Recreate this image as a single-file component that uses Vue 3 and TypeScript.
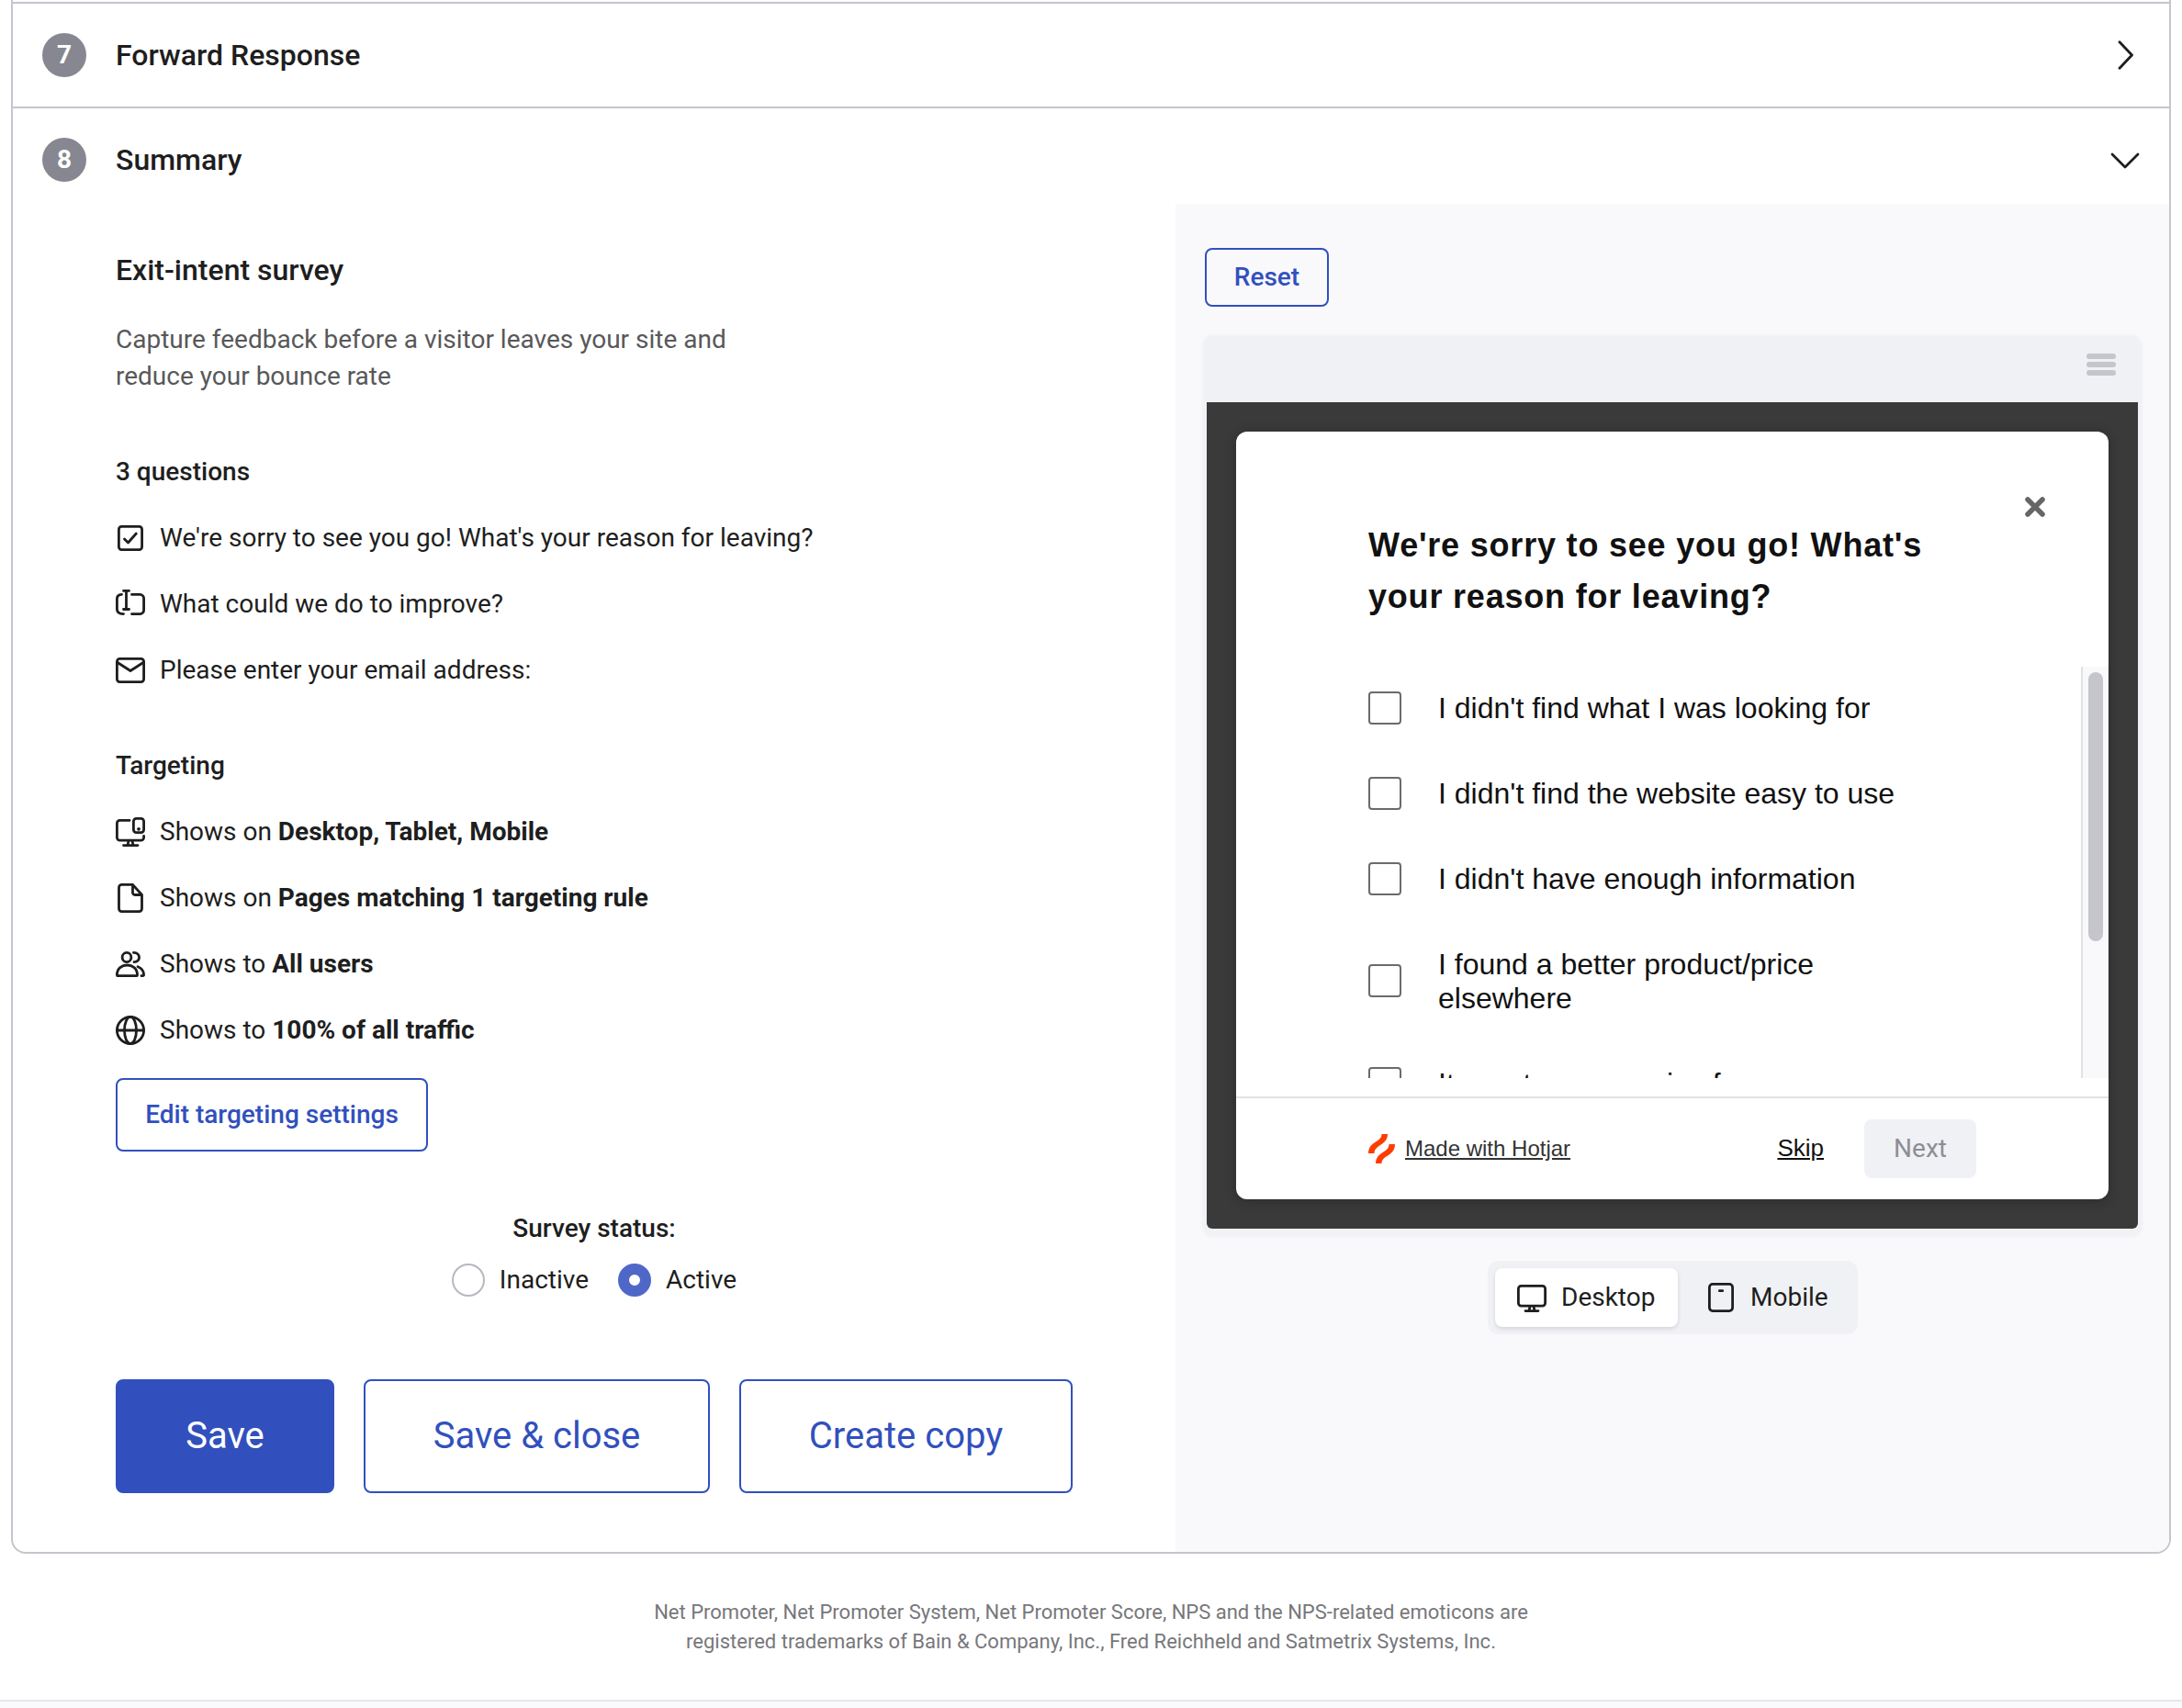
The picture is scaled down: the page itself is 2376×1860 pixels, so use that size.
<script setup lang="ts">
interface TargetRow {
  icon: string
  lead: string
  value: string
}

const questions = [
  { icon: 'check', text: "We're sorry to see you go! What's your reason for leaving?" },
  { icon: 'input', text: 'What could we do to improve?' },
  { icon: 'mail', text: 'Please enter your email address:' },
]

const targeting: TargetRow[] = [
  { icon: 'devices', lead: 'Shows on', value: 'Desktop, Tablet, Mobile' },
  { icon: 'page', lead: 'Shows on', value: 'Pages matching 1 targeting rule' },
  { icon: 'users', lead: 'Shows to', value: 'All users' },
  { icon: 'globe', lead: 'Shows to', value: '100% of all traffic' },
]

const options = [
  "I didn't find what I was looking for",
  "I didn't find the website easy to use",
  "I didn't have enough information",
  'I found a better product/price elsewhere',
  'It was too expensive for me',
]
</script>

<template>
  <div class="page">
    <div class="card">
      <div class="step">
        <span class="badge">7</span>
        <span class="step-title">Forward Response</span>
        <svg class="chev" viewBox="0 0 32 32"><path d="M10 1.7 23.5 16 10 30.3" /></svg>
      </div>
      <div class="step last">
        <span class="badge">8</span>
        <span class="step-title">Summary</span>
        <svg class="chev" viewBox="0 0 32 32"><path d="M2 10 16 24 30 10" /></svg>
      </div>
      <div class="body">
        <section class="summary">
          <h2>Exit-intent survey</h2>
          <p class="desc">Capture feedback before a visitor leaves your site and<br />reduce your bounce rate</p>
          <h3>3 questions</h3>
          <div v-for="q in questions" :key="q.icon" class="row">
            <svg class="ico" viewBox="0 0 32 32">
              <template v-if="q.icon === 'check'">
                <rect x="3.4" y="3.4" width="25.2" height="25.2" rx="3" />
                <path d="M9.5 17 13.5 21 22.3 11" />
              </template>
              <template v-else-if="q.icon === 'input'">
                <path d="M6.5 5.4C3.3 5.7 1.4 7 1.4 10V21.5C1.4 25 3.3 26.6 8.5 26.6" />
                <path d="M17.5 5.4H26.4A4.2 4.2 0 0 1 30.6 9.6V22.4A4.2 4.2 0 0 1 26.4 26.6H17.5" />
                <path d="M8.5 1.4H14.5M11.5 1.4V21.5M8.5 21.5H14.5" />
              </template>
              <template v-else>
                <rect x="1.4" y="3.4" width="29.2" height="25.2" rx="3" />
                <path d="M2 7.5 16 16.5 30 7.5" />
              </template>
            </svg>
            <span>{{ q.text }}</span>
          </div>
          <h3>Targeting</h3>
          <div v-for="t in targeting" :key="t.icon" class="row">
            <svg class="ico" viewBox="0 0 32 32">
              <template v-if="t.icon === 'devices'">
                <path d="M15 3.4H4.5A3.1 3.1 0 0 0 1.4 6.5V22A3.1 3.1 0 0 0 4.5 25.1H27.5A3.1 3.1 0 0 0 30.6 22V20.5" />
                <rect x="19.4" y="1.4" width="11.2" height="15.2" rx="3" />
                <path d="M14 25.5 13 30.5M18 25.5 19 30.5M8.5 30.6H24" />
                <circle class="dot" cx="25" cy="12.8" r="1.9" />
              </template>
              <template v-else-if="t.icon === 'page'">
                <path d="M18.5 1.4H6.5A3 3 0 0 0 3.5 4.4V27.6A3 3 0 0 0 6.5 30.6H25.5A3 3 0 0 0 28.5 27.6V12.5L18.5 1.4V9.5A2.5 2.5 0 0 0 21 12.5H28.5" />
              </template>
              <template v-else-if="t.icon === 'users'">
                <ellipse cx="12" cy="8.5" rx="4.9" ry="5.1" />
                <path d="M1.4 27.5C1.4 13.5 23.5 13.5 23.5 27.5 23.5 28.4 23 28.7 22.3 28.7H2.5C1.7 28.7 1.4 28.4 1.4 27.5Z" />
                <path d="M19.5 3.4C27.5 3.4 27.5 13.7 20 13.7M24 18.8C28.5 20.5 30.6 24 30.6 27.5 30.6 28.4 30 28.7 28 28.7" />
              </template>
              <template v-else>
                <circle cx="16" cy="16" r="14.6" />
                <ellipse cx="16" cy="16" rx="6.5" ry="14.6" />
                <path d="M1.4 16H30.6" />
              </template>
            </svg>
            <span>{{ t.lead }} <b>{{ t.value }}</b></span>
          </div>
          <button class="btn edit">Edit targeting settings</button>
          <div class="status">
            <div class="status-label">Survey status:</div>
            <div class="radios">
              <span class="radio"></span><span class="radio-text">Inactive</span>
              <span class="radio on"></span><span class="radio-text">Active</span>
            </div>
          </div>
          <div class="actions">
            <button class="btn big primary">Save</button>
            <button class="btn big close">Save &amp; close</button>
            <button class="btn big copy">Create copy</button>
          </div>
        </section>

        <section class="preview">
          <button class="btn reset">Reset</button>
          <div class="browser">
            <div class="browser-bar"><div class="burger"><i></i><i></i><i></i></div></div>
            <div class="stage">
              <div class="modal">
                <svg class="x" viewBox="0 0 22 22"><path d="M3 3 19 19M19 3 3 19" /></svg>
                <div class="question">We're sorry to see you go! What's<br />your reason for leaving?</div>
                <div class="scroller">
                  <div class="options">
                    <div v-for="o in options" :key="o" class="option">
                      <span class="box"></span><span class="option-text">{{ o }}</span>
                    </div>
                  </div>
                  <div class="track"><div class="thumb"></div></div>
                </div>
                <div class="foot">
                  <svg class="logo" viewBox="0 0 29 32">
                    <path d="M14.5 0H21C21 6 17.5 9.3 13 12 9 14.5 6.5 17 6.5 21H0C0 14.5 3.5 11.3 8 8.5 12 6 14.5 4 14.5 0Z" />
                    <path d="M22.5 11H29C29 17.5 25.5 20.8 21 23.5 17 26 14.5 28 14.5 32H8C8 26 11.5 22.5 16 19.8 20 17.3 22.5 15 22.5 11Z" />
                  </svg>
                  <a class="made">Made with Hotjar</a>
                  <a class="skip">Skip</a>
                  <span class="next">Next</span>
                </div>
              </div>
            </div>
          </div>
          <div class="toggle">
            <div class="tab active">
              <svg class="ico" viewBox="0 0 32 32">
                <rect x="1.4" y="3.4" width="29.2" height="21.7" rx="3" />
                <path d="M14 25.5 13 30.5M18 25.5 19 30.5M9 30.6H23" />
              </svg>
              <span>Desktop</span>
            </div>
            <div class="tab">
              <svg class="ico" viewBox="0 0 32 32">
                <rect x="3.4" y="1.4" width="25.2" height="29.2" rx="3.5" />
                <path d="M14.3 8.7H17.7" />
              </svg>
              <span>Mobile</span>
            </div>
          </div>
        </section>
      </div>
    </div>
    <p class="legal">
      Net Promoter, Net Promoter System, Net Promoter Score, NPS and the NPS-related emoticons are<br />registered trademarks of Bain &amp; Company, Inc., Fred Reichheld and Satmetrix Systems, Inc.
    </p>
    <div class="bottom"></div>
  </div>
</template>

<style>
body {
  margin: 0;
  background: #fff;
}
</style>

<style scoped>
* {
  box-sizing: border-box;
}
.page {
  width: 2376px;
  height: 1860px;
  overflow: hidden;
  display: flex;
  flex-direction: column;
  font-family: Roboto, sans-serif;
  font-size: 28px;
  color: #1e1e20;
}
.card {
  width: 2352px;
  height: 1692px;
  margin-left: 12px;
  border: 2px solid #c6c5ce;
  border-top: 0;
  border-radius: 0 0 16px 16px;
  overflow: hidden;
  flex: none;
}
.step {
  height: 114px;
  margin-top: 2px;
  border-top: 2px solid #c6c5ce;
  padding: 0 32px;
  display: flex;
  align-items: center;
}
.step.last {
  margin-top: 0;
  height: 106px;
  align-items: flex-start;
  padding-top: 32px;
}
.badge {
  width: 48px;
  height: 48px;
  border-radius: 50%;
  background: #868790;
  color: #fff;
  font-weight: 700;
  text-align: center;
  line-height: 47px;
}
.step-title {
  margin-left: 32px;
  font-size: 32px;
  line-height: 48px;
  font-weight: 500;
}
.chev {
  width: 32px;
  height: 32px;
  margin-left: auto;
}
.step.last .chev {
  margin-top: 8px;
}
.chev path {
  fill: none;
  stroke: #1e1e20;
  stroke-width: 2.8;
  stroke-linecap: round;
  stroke-linejoin: round;
}
.body {
  display: flex;
  height: 1468px;
}
.summary {
  width: 1266px;
  padding: 50px 0 0 112px;
}
h2 {
  margin: 0;
  font-size: 32px;
  line-height: 44px;
  font-weight: 500;
}
.desc {
  margin: 34px 0 0;
  line-height: 40px;
  color: #58585a;
}
h3 {
  margin: 64px 0 0;
  font-size: 28px;
  line-height: 40px;
  font-weight: 500;
}
.row {
  height: 40px;
  margin-top: 32px;
  display: flex;
  align-items: center;
  gap: 16px;
  line-height: 40px;
  white-space: nowrap;
}
.row b {
  font-weight: 700;
}
.ico {
  width: 32px;
  height: 32px;
  flex: none;
  fill: none;
  stroke: #1e1e20;
  stroke-width: 2.8;
  stroke-linecap: round;
  stroke-linejoin: round;
}
.dot {
  fill: #1e1e20;
  stroke: none;
}
.btn {
  display: block;
  padding: 0 0 1px;
  border: 2px solid #3150bd;
  border-radius: 8px;
  background: transparent;
  color: #3150bd;
  font-family: inherit;
  font-size: 28px;
  font-weight: 500;
}
.edit {
  width: 340px;
  height: 80px;
  margin-top: 32px;
}
.status {
  width: 1042px;
  margin-top: 64px;
  text-align: center;
}
.status-label {
  font-weight: 500;
  line-height: 40px;
}
.radios {
  display: flex;
  align-items: center;
  justify-content: center;
  margin-top: 16px;
  height: 40px;
}
.radio {
  width: 36px;
  height: 36px;
  border-radius: 50%;
  border: 2px solid #b7b8c0;
  margin-right: 16px;
}
.radio.on {
  border: 12px solid #4f68c8;
  margin-left: 32px;
}
.radio-text {
  padding-bottom: 1px;
}
.actions {
  display: flex;
  gap: 32px;
  margin-top: 88px;
}
.big {
  height: 124px;
  font-size: 40px;
  font-weight: 400;
}
.primary {
  width: 238px;
  background: #3150bd;
  color: #fff;
}
.close {
  width: 377px;
}
.copy {
  width: 363px;
}
.preview {
  flex: 1;
  background: #f9f9fc;
  padding: 48px 34px 0 32px;
}
.reset {
  width: 135px;
  height: 64px;
}
.browser {
  width: 1014px;
  height: 972px;
  margin: 32px 0 0 2px;
  border-radius: 6px;
  background: #f0f1f5;
  box-shadow: 0 4px 3px 5px #f1f2f5;
}
.browser-bar {
  height: 72px;
  display: flex;
  justify-content: flex-end;
  padding: 19px 24px 0 0;
}
.burger {
  width: 32px;
  display: flex;
  flex-direction: column;
  gap: 3px;
}
.burger i {
  height: 6px;
  border-radius: 3px;
  background: #c5c6cc;
}
.stage {
  height: 900px;
  padding: 32px;
  background: #3a3a3a;
  border-radius: 0 0 6px 6px;
}
.modal {
  position: relative;
  height: 836px;
  background: #fff;
  border-radius: 12px;
  box-shadow: 0 2px 12px 2px rgba(0, 0, 0, 0.2);
  display: flex;
  flex-direction: column;
  font-family: "Liberation Sans", Arial, sans-serif;
  color: #111;
}
.x {
  position: absolute;
  top: 71px;
  right: 69px;
  width: 22px;
  height: 22px;
}
.x path {
  stroke: #666;
  stroke-width: 5.5;
  stroke-linecap: round;
}
.question {
  margin: 96px 0 0 144px;
  height: 160px;
  font-size: 36px;
  line-height: 56px;
  font-weight: 700;
  letter-spacing: 0.8px;
  white-space: nowrap;
}
.scroller {
  height: 448px;
  overflow: hidden;
  display: flex;
}
.options {
  flex: 1;
  margin-top: -1px;
  padding-left: 144px;
}
.option {
  display: flex;
  align-items: center;
  padding: 28px 0;
}
.box {
  width: 36px;
  height: 36px;
  margin: -1px 0 1px;
  flex: none;
  border: 2px solid #6b6b6d;
  border-radius: 4px;
}
.option-text {
  width: 520px;
  margin-left: 40px;
  font-size: 32px;
  line-height: 37px;
}
.track {
  width: 30px;
  border-left: 2px solid #e2e2e4;
  border-right: 1px solid #ececef;
  background: #f9f9fc;
  padding: 6px 0 0 6px;
}
.thumb {
  width: 16px;
  height: 293px;
  border-radius: 8px;
  background: #c5c6cc;
}
.foot {
  margin-top: 20px;
  height: 112px;
  border-top: 2px solid #e2e2e2;
  padding: 0 144px;
  display: flex;
  align-items: center;
}
.logo {
  width: 29px;
  height: 32px;
  fill: #ff3c00;
}
.made,
.skip {
  text-decoration: underline;
  padding-bottom: 1px;
}
.made {
  margin-left: 11px;
  font-size: 24px;
  color: #333;
}
.skip {
  margin-left: auto;
  font-size: 26px;
}
.next {
  width: 122px;
  height: 64px;
  margin-left: 44px;
  border-radius: 8px;
  background: #f0f1f5;
  color: #8d8e93;
  font-family: Roboto, sans-serif;
  font-size: 28px;
  line-height: 63px;
  text-align: center;
}
.toggle {
  width: 403px;
  height: 80px;
  margin: 35px 0 0 308px;
  padding: 8px;
  border-radius: 12px;
  background: #f0f1f5;
  display: flex;
}
.tab {
  flex: none;
  display: flex;
  align-items: center;
  gap: 16px;
  height: 64px;
  width: 199px;
  padding-left: 24px;
  border-radius: 8px;
}
.tab + .tab {
  width: 188px;
  padding-left: 31px;
}
.tab span {
  padding-bottom: 1px;
}
.tab.active {
  background: #fff;
  box-shadow: 0 2px 4px rgba(40, 40, 60, 0.14);
}
.legal {
  margin: 48px 0 0;
  text-align: center;
  font-size: 22px;
  line-height: 32px;
  color: #77777b;
}
.bottom {
  margin-top: 47px;
  height: 10px;
  border-top: 2px solid #e6e6ea;
  background: #fafafc;
  flex: none;
}
</style>
